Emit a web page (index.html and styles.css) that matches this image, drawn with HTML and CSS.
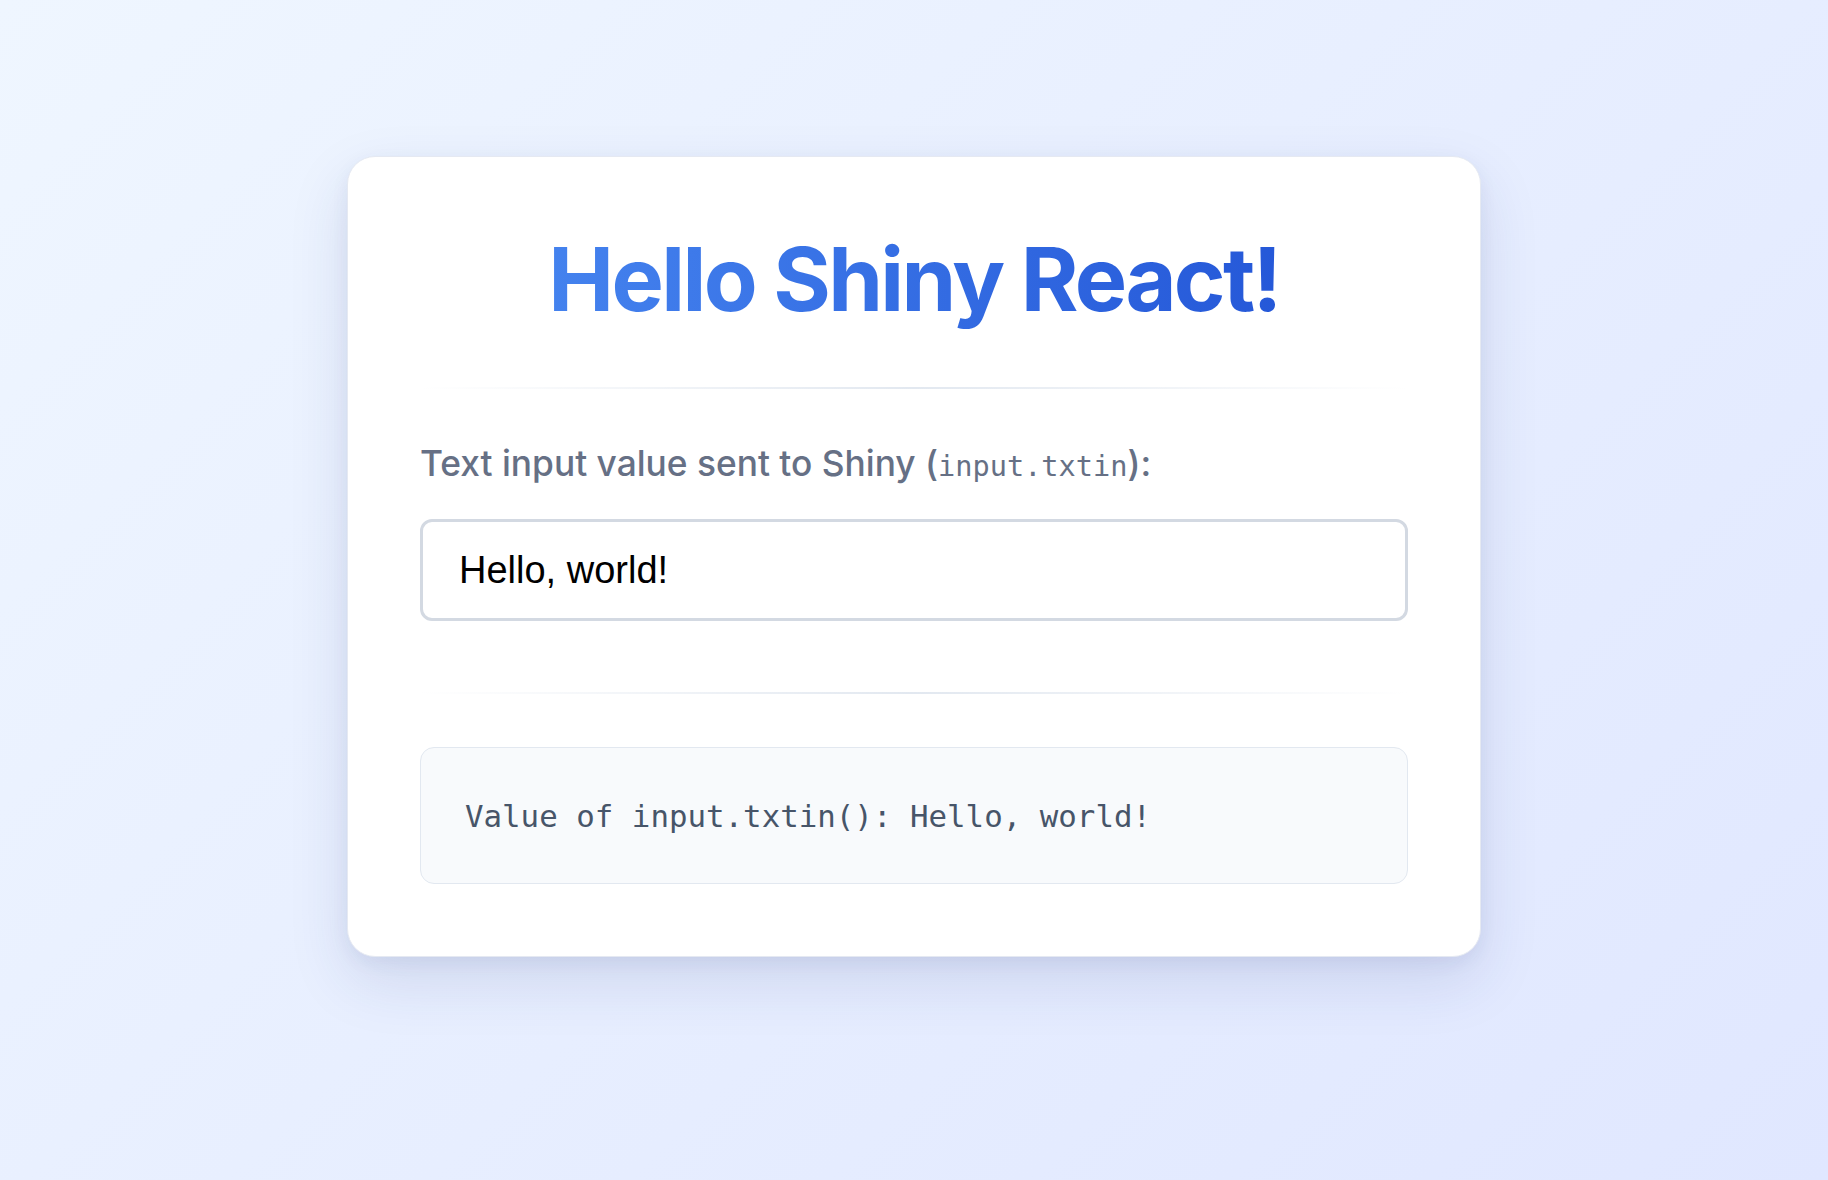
FILE: index.html
```html
<!DOCTYPE html>
<html lang="en">
<head>
<meta charset="utf-8">
<title>Hello Shiny React!</title>
<link rel="stylesheet" href="styles.css">
</head>
<body>
  <main class="card">
    <h1 class="title">Hello Shiny React!</h1>
    <div class="divider divider-top"></div>
    <label class="label" for="txtin">Text input value sent to Shiny (<code class="code">input.txtin</code>):</label>
    <input class="text-input" id="txtin" type="text" value="Hello, world!">
    <div class="divider divider-bottom"></div>
    <div class="output">Value of input.txtin(): Hello, world!</div>
  </main>
</body>
</html>
```

FILE: styles.css
```css
html, body {
  margin: 0;
  padding: 0;
}

body {
  min-height: 100vh;
  box-sizing: border-box;
  padding-top: 156px;
  background: linear-gradient(135deg, #eff6ff 0%, #e0e7ff 100%);
  font-family: Inter, "Noto Sans", sans-serif;
}

.card {
  box-sizing: border-box;
  width: 1134px;
  margin: 0 auto;
  padding: 70px 72px 72px;
  background: #ffffff;
  border: 1px solid #e5e9f2;
  border-radius: 28px;
  box-shadow: 0 24px 60px rgba(40, 56, 120, 0.13), 0 6px 18px rgba(40, 56, 120, 0.06);
  display: flex;
  flex-direction: column;
}

.title {
  margin: 0;
  text-align: center;
  font-family: Inter, sans-serif;
  font-weight: 700;
  font-size: 88px;
  line-height: 1.2;
  letter-spacing: -0.03em;
  background: linear-gradient(90deg, #4482ee 0%, #2558d8 100%);
  -webkit-background-clip: text;
  background-clip: text;
  color: transparent;
  align-self: center;
}

.divider {
  height: 2px;
  background: linear-gradient(90deg, rgba(226, 232, 240, 0) 0%, #e2e8f0 50%, rgba(226, 232, 240, 0) 100%);
}

.divider-top {
  margin: 54px 0 50px;
}

.label {
  display: block;
  font-family: Inter, sans-serif;
  font-weight: 500;
  font-size: 35.3px;
  line-height: 1.4;
  color: #667085;
}

.code {
  font-family: "DejaVu Sans Mono", monospace;
  font-weight: 400;
  font-size: 28.6px;
}

.text-input {
  box-sizing: border-box;
  display: block;
  width: 100%;
  height: 102px;
  margin-top: 31px;
  padding: 0 36px;
  border: 3px solid #d3d9e2;
  border-radius: 12px;
  background: #ffffff;
  font-family: "Liberation Sans", Arial, sans-serif;
  font-size: 38px;
  color: #000000;
  outline: none;
}

.divider-bottom {
  margin: 71px 0 53px;
}

.output {
  box-sizing: border-box;
  height: 137px;
  padding: 0 44px;
  display: flex;
  align-items: center;
  background: #f8fafc;
  border: 1px solid #e2e8f0;
  border-radius: 14px;
  font-family: "DejaVu Sans Mono", monospace;
  font-size: 30.8px;
  color: #475569;
}
```
